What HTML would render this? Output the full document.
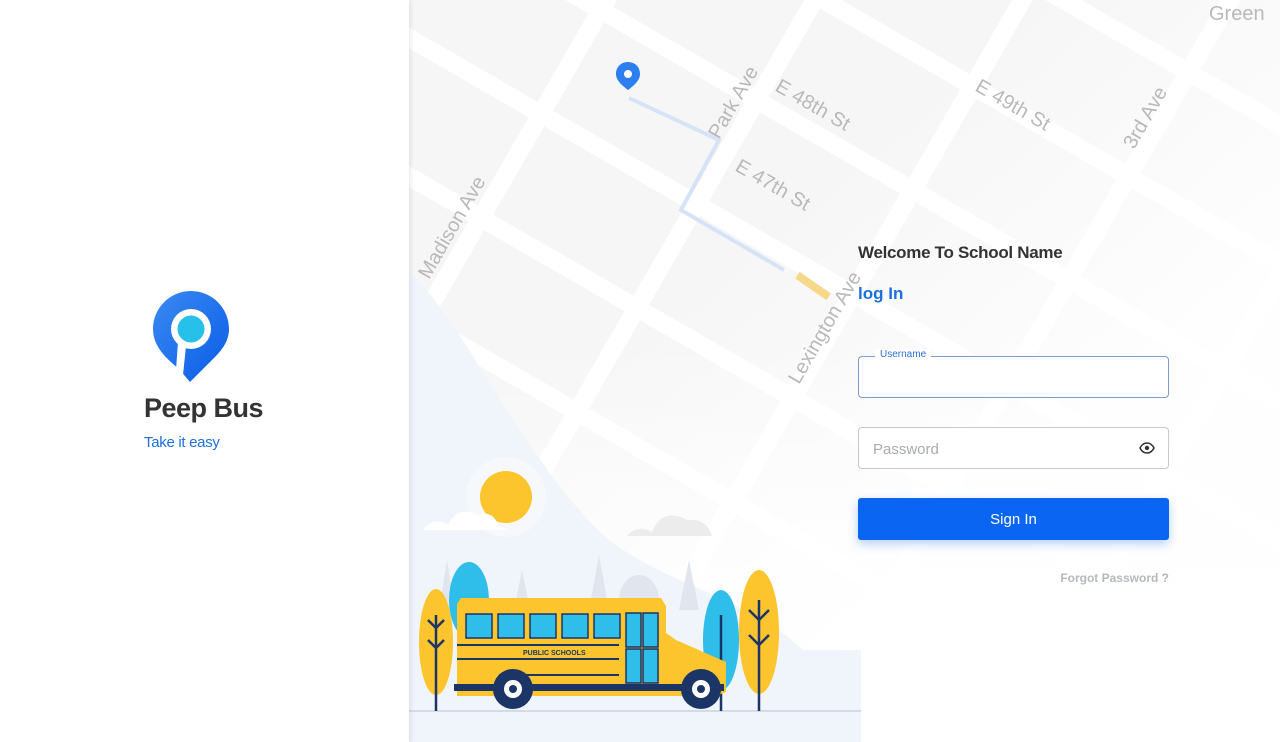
<!DOCTYPE html>
<html><head><meta charset="utf-8"><style>
*{margin:0;padding:0;box-sizing:border-box}
html,body{width:1280px;height:742px;overflow:hidden}
body{font-family:"Liberation Sans",Roboto,sans-serif;background:#fff;position:relative}
.left{position:absolute;left:0;top:0;width:409px;height:742px;background:#fff;z-index:3;box-shadow:2px 0 4px rgba(0,0,0,.08)}
.map{position:absolute;left:409px;top:0;width:871px;height:742px;background:#f6f6f6;overflow:hidden}
.form{position:absolute;left:858px;top:0;width:311px;height:742px;z-index:5}
.t1{position:absolute;top:243px;font-size:17px;font-weight:bold;color:#333;white-space:nowrap;letter-spacing:-0.3px}
.t2{position:absolute;top:284px;font-size:17px;font-weight:bold;color:#1a6fdb}
.inp{position:absolute;left:0;width:311px;height:42px;border:1px solid #c9c9c9;border-radius:4px;background:#fff}
.lab{position:absolute;left:16px;top:-8px;background:#fff;padding:0 5px;font-size:10px;color:#2c6ed8}
.btn{position:absolute;top:498px;left:0;width:311px;height:42px;background:#0a66f2;border-radius:3px;color:#fff;font-size:15px;text-align:center;line-height:44px;box-shadow:0 4px 10px rgba(10,102,242,.3)}
.fp{position:absolute;top:571px;right:0;font-size:12px;font-weight:bold;color:#b5b8bd;white-space:nowrap}
</style></head><body>
<div class="left">
<svg style="position:absolute;left:152px;top:290px" width="78" height="94" viewBox="0 0 78 94">
<defs><linearGradient id="g" x1="0" y1="0" x2="1" y2="1"><stop offset="0" stop-color="#3a8af2"/><stop offset="1" stop-color="#0a5ce8"/></linearGradient></defs>
<path d="M39 1C18 1 1 18 1 39c0 18 14 30 26 40l11 13 25-25C71 59 77 50 77 39 77 18 60 1 39 1z" fill="url(#g)"/>
<circle cx="39" cy="39" r="20" fill="#fff"/>
<path d="M26 52 L34 56 L31 85 L24 80z" fill="#fff"/>
<circle cx="39" cy="39" r="13.5" fill="#27c0e9"/>
</svg>
<div style="position:absolute;left:144px;top:393px;font-size:27px;font-weight:bold;color:#333;letter-spacing:-0.5px">Peep Bus</div>
<div style="position:absolute;left:144px;top:434px;font-size:15px;color:#1a6fdb;letter-spacing:-0.3px">Take it easy</div>
</div>
<div class="map">
<svg width="871" height="742" viewBox="0 0 871 742" style="position:absolute;left:0;top:0">
<defs><linearGradient id="fade" x1="0" y1="0" x2="1" y2="1"><stop offset="0.35" stop-color="#fff" stop-opacity="0"/><stop offset="0.7" stop-color="#fff" stop-opacity="0.95"/></linearGradient>
<linearGradient id="fade2" x1="0" y1="0" x2="0" y2="1"><stop offset="0.45" stop-color="#fff" stop-opacity="0"/><stop offset="0.8" stop-color="#fff" stop-opacity="0.7"/></linearGradient></defs>
<g stroke="#fff" stroke-width="18">
<g transform="rotate(30 435 371)">
<line x1="-400" y1="-60" x2="1300" y2="-60"/><line x1="-400" y1="60" x2="1300" y2="60"/><line x1="-400" y1="180" x2="1300" y2="180"/><line x1="-400" y1="300" x2="1300" y2="300"/><line x1="-400" y1="420" x2="1300" y2="420"/><line x1="-400" y1="540" x2="1300" y2="540"/><line x1="-400" y1="660" x2="1300" y2="660"/><line x1="-400" y1="780" x2="1300" y2="780"/>
</g>
<g transform="rotate(-60 435 371)">
<line x1="-400" y1="-200" x2="1300" y2="-200"/><line x1="-400" y1="-20" x2="1300" y2="-20"/><line x1="-400" y1="160" x2="1300" y2="160"/><line x1="-400" y1="340" x2="1300" y2="340"/><line x1="-400" y1="520" x2="1300" y2="520"/><line x1="-400" y1="700" x2="1300" y2="700"/><line x1="-400" y1="880" x2="1300" y2="880"/>
</g></g>
<rect x="0" y="0" width="871" height="742" fill="url(#fade)"/>
<rect x="0" y="0" width="871" height="742" fill="url(#fade2)"/>
<g fill="#b9b9b9" font-size="20" font-family="Liberation Sans">
<text transform="translate(310 140) rotate(-60)">Park Ave</text>
<text transform="translate(365 90) rotate(30)">E 48th St</text>
<text transform="translate(325 170) rotate(30)">E 47th St</text>
<text transform="translate(20 280) rotate(-60)">Madison Ave</text>
<text transform="translate(565 90) rotate(30)">E 49th St</text>
<text transform="translate(725 150) rotate(-60)">3rd Ave</text>
<text transform="translate(390 385) rotate(-60)">Lexington Ave</text>
<text x="800" y="20">Green</text>
</g>
<path d="M220 98 L310 140 L272 210 L375 270" stroke="#d6e3f7" stroke-width="4" fill="none"/>
<rect x="385" y="282" width="38" height="8" fill="#f6d88a" transform="rotate(35 404 286)"/>
<path d="M219 62c-7 0-12 5-12 12 0 7 7 12 12 16 5-4 12-9 12-16 0-7-5-12-12-12z" fill="#2d7ff0"/><circle cx="219" cy="74" r="4" fill="#fff"/>
<path d="M0 270 C60 330 120 470 200 540 C280 600 380 600 430 700 L430 742 L0 742Z" fill="#f0f4fb"/>
<rect x="0" y="650" width="452" height="92" fill="#f0f4fb"/>
<line x1="0" y1="711" x2="452" y2="711" stroke="#d5dbe5" stroke-width="2"/>
<circle cx="97" cy="497" r="40" fill="#f6f8fc"/>
<circle cx="97" cy="497" r="26" fill="#fcc42d"/>
<path d="M14 530 q10-14 25-5 q10-20 30-10 q15-5 20 10 l10 5z" fill="#fff"/>
<path d="M218 536 q10-12 25-4 q10-25 35-12 q20 -2 25 16z" fill="#ececec"/>
<g fill="#e1e6ee"><path d="M30 610 l8-50 8 50z"/><path d="M105 610 l8-40 8 40z"/><path d="M180 610 l10-55 10 55z"/><path d="M270 610 l10-50 10 50z"/><ellipse cx="230" cy="600" rx="20" ry="25"/></g>
<ellipse cx="60" cy="600" rx="20" ry="38" fill="#2fbde9"/>
<ellipse cx="27" cy="642" rx="17" ry="53" fill="#fcc42d"/>
<ellipse cx="312" cy="640" rx="18" ry="50" fill="#2fbde9"/>
<ellipse cx="350" cy="632" rx="20" ry="62" fill="#fcc42d"/>
<g stroke="#1c3567" stroke-width="2.5" fill="none"><line x1="27" y1="615" x2="27" y2="711"/><line x1="350" y1="600" x2="350" y2="711"/><line x1="312" y1="615" x2="312" y2="711"/><path d="M19 620l8 8 8-8M19 640l8 8 8-8M340 610l10 10 10-10M340 635l10 10 10-10"/></g>
<path d="M52 598 h200 l5 8 v27 l10 7 50 22 v30 l-10 4 H48 v-92z" fill="#fcc42d"/>
<g fill="#2fbde9" stroke="#1c3567" stroke-width="1.5"><rect x="57" y="614" width="26" height="24"/><rect x="89" y="614" width="26" height="24"/><rect x="121" y="614" width="26" height="24"/><rect x="153" y="614" width="26" height="24"/><rect x="185" y="614" width="26" height="24"/><rect x="217" y="613" width="15" height="34"/><rect x="234" y="613" width="15" height="34"/><rect x="217" y="649" width="15" height="34"/><rect x="234" y="649" width="15" height="34"/></g>
<g stroke="#1c3567" stroke-width="2"><line x1="48" y1="645" x2="210" y2="645"/><line x1="48" y1="659" x2="210" y2="659"/><line x1="90" y1="675" x2="210" y2="675"/></g>
<text x="114" y="655" font-size="7" fill="#1c3567" font-weight="bold">PUBLIC SCHOOLS</text>
<rect x="45" y="684" width="270" height="7" fill="#1c3567"/>
<circle cx="104" cy="689" r="20" fill="#1c3567"/><circle cx="104" cy="689" r="9" fill="#fff"/><circle cx="104" cy="689" r="4" fill="#1c3567"/>
<circle cx="292" cy="689" r="20" fill="#1c3567"/><circle cx="292" cy="689" r="9" fill="#fff"/><circle cx="292" cy="689" r="4" fill="#1c3567"/>
</svg>
</div>
<div class="form">
<div class="t1">Welcome To School Name</div>
<div class="t2">log In</div>
<div class="inp" style="top:356px;border-color:#7d9cc9"><span class="lab">Username</span></div>
<div class="inp" style="top:427px"><span style="position:absolute;left:14px;top:13px;font-size:15px;color:#a8abb1">Password</span>
<svg style="position:absolute;right:13px;top:14px" width="16" height="12" viewBox="0 0 16 12"><path d="M1 6C3 2 6 1 8 1s5 1 7 5c-2 4-5 5-7 5S3 10 1 6z" fill="none" stroke="#333" stroke-width="1.5"/><circle cx="8" cy="6" r="2.2" fill="#333"/></svg></div>
<div class="btn">Sign In</div>
<div class="fp">Forgot Password ?</div>
</div>
</body></html>
